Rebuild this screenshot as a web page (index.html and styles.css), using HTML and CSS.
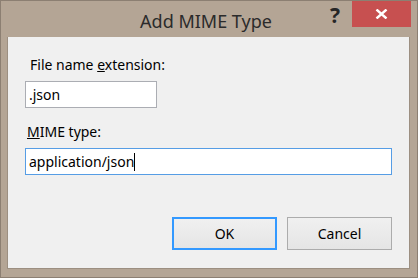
FILE: index.html
```html
<!DOCTYPE html>
<html lang="en">
<head>
  <meta charset="UTF-8" />
  <title>Add MIME Type</title>
  <link rel="stylesheet" href="styles.css">
</head>
<body>
  <div class="window">
    <header class="titlebar">
      <span class="spacer"></span>
      <h1 class="title">Add MIME Type</h1>
      <div class="controls">
        <span class="help-btn">?</span>
        <span class="close-btn">
          <svg width="13" height="10" viewBox="0 0 13 10">
            <path d="M1.5 0.5 L11.5 9.5 M11.5 0.5 L1.5 9.5" stroke="#fff" stroke-width="2.4" fill="none"/>
          </svg>
        </span>
      </div>
    </header>

    <div class="client">
      <div class="field">
        <label class="field-label ext-label">File name <u>e</u>xtension:</label>
        <div class="textbox short">.json</div>
      </div>

      <div class="field">
        <label class="field-label mime-label"><u>M</u>IME type:</label>
        <div class="textbox wide focused">application/json<span class="caret"></span></div>
      </div>

      <div class="buttons">
        <button class="btn default">OK</button>
        <button class="btn">Cancel</button>
      </div>
    </div>
  </div>
</body>
</html>
```

FILE: styles.css
```css
* {
  margin: 0;
  padding: 0;
  box-sizing: border-box;
}

body {
  font-family: 'Noto Sans', sans-serif;
  color: #000;
}

.window {
  width: 418px;
  height: 278px;
  background: #b4a595;
  border: 1px solid #8c7f72;
  display: flex;
  flex-direction: column;
}

.titlebar {
  height: 36px;
  display: grid;
  grid-template-columns: 1fr auto 1fr;
  padding-right: 6px;
}

.title {
  font-size: 18px;
  font-weight: 400;
  color: #2b2b2b;
  line-height: 36px;
  padding-top: 2px;
}

.controls {
  display: flex;
  justify-content: flex-end;
  align-items: flex-start;
}

.help-btn {
  width: 22px;
  margin-right: 6px;
  text-align: center;
  font-size: 21px;
  font-weight: 700;
  line-height: 29px;
  color: #262626;
}

.close-btn {
  width: 59px;
  height: 26px;
  background: #c75050;
  display: flex;
  align-items: center;
  justify-content: center;
}

.client {
  flex: 1;
  margin: 0 7px 8px 6px;
  background: #f0f0f0;
  border-left: 1px solid #9c8f81;
  border-right: 1px solid #9c8f81;
  border-bottom: 1px solid #9c8f81;
  padding: 18px 17px 0 17px;
  font-size: 14px;
}

.field {
  display: flex;
  flex-direction: column;
  align-items: flex-start;
}

.field + .field {
  margin-top: 14px;
}

.field-label {
  line-height: 20px;
  margin-bottom: 6px;
}

.ext-label {
  padding-left: 5px;
}

.mime-label {
  padding-left: 2px;
}

.textbox {
  height: 27px;
  background: #fff;
  border: 1px solid #abadb3;
  padding: 0 3px;
  line-height: 25px;
  display: flex;
  align-items: center;
}

.textbox.short {
  width: 132px;
}

.textbox.wide {
  width: 367px;
}

.textbox.focused {
  border-color: #569de5;
}

.caret {
  width: 1px;
  height: 18px;
  background: #000;
}

.buttons {
  display: flex;
  justify-content: flex-end;
  gap: 10px;
  margin-top: 42px;
}

.btn {
  width: 105px;
  height: 33px;
  font-family: inherit;
  font-size: 14px;
  color: #000;
  background: linear-gradient(#f0f0f0, #e5e5e5);
  border: 1px solid #acacac;
}

.btn.default {
  border: 2px solid #3399ff;
}
```
